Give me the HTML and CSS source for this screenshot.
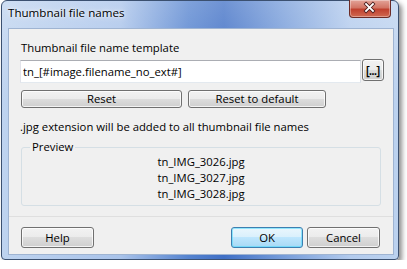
FILE: index.html
```html
<!DOCTYPE html>
<html lang="en">

<head>
    <meta charset="UTF-8">
    <title>Thumbnail file names</title>
    <link rel="stylesheet" href="styles.css">
</head>

<body>
    <div class="window">
        <div class="titlebar">
            <span class="title">Thumbnail file names</span>
            <div class="close-button">
                <svg width="42" height="18" viewBox="0 0 42 18">
                    <path d="M17.5 5 L24.5 12 M24.5 5 L17.5 12" stroke="#4a1c1c" stroke-width="3.6" stroke-linecap="square" />
                    <path d="M17.5 5 L24.5 12 M24.5 5 L17.5 12" stroke="#fff" stroke-width="2" stroke-linecap="square" />
                </svg>
            </div>
        </div>

        <div class="client">
            <div class="content">
                <div class="label">Thumbnail file name template</div>
                <div class="template-row">
                    <input type="text" class="textbox" value="tn_[#image.filename_no_ext#]" />
                    <button class="btn tags-button">[...]</button>
                </div>
                <div class="reset-row">
                    <button class="btn reset-button">Reset</button>
                    <button class="btn reset-default-button">Reset to default</button>
                </div>
                <div class="note">.jpg extension will be added to all thumbnail file names</div>
                <fieldset class="preview">
                    <legend>Preview</legend>
                    <div class="preview-line">tn_IMG_3026.jpg</div>
                    <div class="preview-line">tn_IMG_3027.jpg</div>
                    <div class="preview-line">tn_IMG_3028.jpg</div>
                </fieldset>
            </div>

            <div class="footer">
                <button class="btn footer-button">Help</button>
                <button class="btn footer-button ok-button">OK</button>
                <button class="btn footer-button">Cancel</button>
            </div>
        </div>
    </div>
</body>

</html>
```

FILE: styles.css
```css
:root {
    --dialog-bg: #f0f0f0;
    --ui-font: "Open Sans", "Noto Sans", sans-serif;
}

body {
    margin: 0;
    background: #fff;
    font-family: var(--ui-font);
    font-size: 11.3px;
    color: #000;
}

.window {
    box-sizing: border-box;
    width: 398px;
    height: 260px;
    margin-left: 1px;
    padding: 0 4px 4px 6px;
    border: 1px solid #3b5070;
    border-radius: 6px 6px 4px 4px;
    background:
        linear-gradient(180deg, rgba(255, 255, 255, 0.25), rgba(255, 255, 255, 0) 40%),
        linear-gradient(90deg, #bed3ef 0%, #a9c3ea 30%, #5583cf 47%, #3f6fc5 56%, #7299d8 70%, #b3cbed 88%, #bcd2ef 100%);
    box-shadow: 3px 3px 5px rgba(0, 0, 0, 0.45);
    display: flex;
    flex-direction: column;
}

.titlebar {
    height: 27px;
    display: flex;
    align-items: flex-start;
}

.title {
    margin-top: 4px;
    line-height: 16px;
    font-size: 11.6px;
    text-shadow: 0 0 6px rgba(255, 255, 255, 0.9), 0 0 3px rgba(255, 255, 255, 0.8);
}

.close-button {
    width: 42px;
    height: 18px;
    margin: -1px 3px 0 auto;
    box-sizing: border-box;
    border: 1px solid #6b2b26;
    border-top: none;
    border-radius: 0 0 4px 4px;
    background: linear-gradient(180deg, #e3a499 0%, #d27565 45%, #c0412f 55%, #d06a52 100%);
    box-shadow: inset 0 0 0 1px rgba(255, 255, 255, 0.35);
    display: flex;
    justify-content: center;
}

.close-button svg {
    margin-left: -1px;
    margin-top: -1px;
}

.client {
    flex: 1;
    border: 1px solid #9fb4d2;
    background: var(--dialog-bg);
    display: flex;
    flex-direction: column;
}

.content {
    padding: 11px 0 0 11px;
}

.label {
    line-height: 16px;
    padding-left: 1px;
}

.template-row {
    display: flex;
    align-items: flex-start;
    margin-top: 3px;
}

.textbox {
    box-sizing: border-box;
    width: 341px;
    height: 23px;
    margin: 1px 1px 0 0;
    padding: 0 2px;
    border: 1px solid;
    border-color: #abadb3 #dbdfe6 #e3e9ef #e2e3ea;
    background: #fff;
    font-family: var(--ui-font);
    font-size: 11.3px;
    color: #000;
    outline: none;
}

.btn {
    box-sizing: border-box;
    padding: 0;
    border: 1px solid #707070;
    border-radius: 3px;
    background: linear-gradient(180deg, #f2f2f2 0%, #ebebeb 50%, #dddddd 50%, #cfcfcf 100%);
    box-shadow: inset 0 0 0 1px rgba(255, 255, 255, 0.75);
    font-family: var(--ui-font);
    font-size: 11.3px;
    color: #000;
}

.tags-button {
    width: 22px;
    height: 22px;
    font-size: 12.5px;
    font-weight: 600;
    letter-spacing: -1px;
    text-indent: -1px;
}

.reset-row {
    display: flex;
    gap: 6px;
    margin-top: 7px;
    padding-left: 1px;
}

.reset-button {
    width: 161px;
    height: 18px;
    line-height: 14px;
}

.reset-default-button {
    width: 138px;
    height: 18px;
    line-height: 14px;
}

.note {
    margin-top: 11px;
    line-height: 16px;
}

.preview {
    width: 360px;
    box-sizing: border-box;
    margin: 5px 0 0 1px;
    padding: 0 8px 3px;
    border: 1px solid #d5dfe5;
    border-radius: 3px;
}

.preview legend {
    padding: 0 2px;
    line-height: 14px;
}

.preview-line {
    text-align: center;
    line-height: 16px;
}

.footer {
    margin-top: auto;
    border-top: 1px solid #dfdfdf;
    display: flex;
    gap: 4px;
    padding: 10px 13px 6px 12px;
}

.footer-button {
    width: 73px;
    height: 21px;
}

.footer-button:first-child {
    margin-right: auto;
}

.ok-button {
    width: 72px;
    border-color: #3c7fb1;
    background: linear-gradient(180deg, #eaf6fd 0%, #d9f0fc 50%, #bee6fd 50%, #a7d9f5 100%);
    box-shadow: inset 0 0 0 1px rgba(72, 216, 251, 0.55);
}
```
